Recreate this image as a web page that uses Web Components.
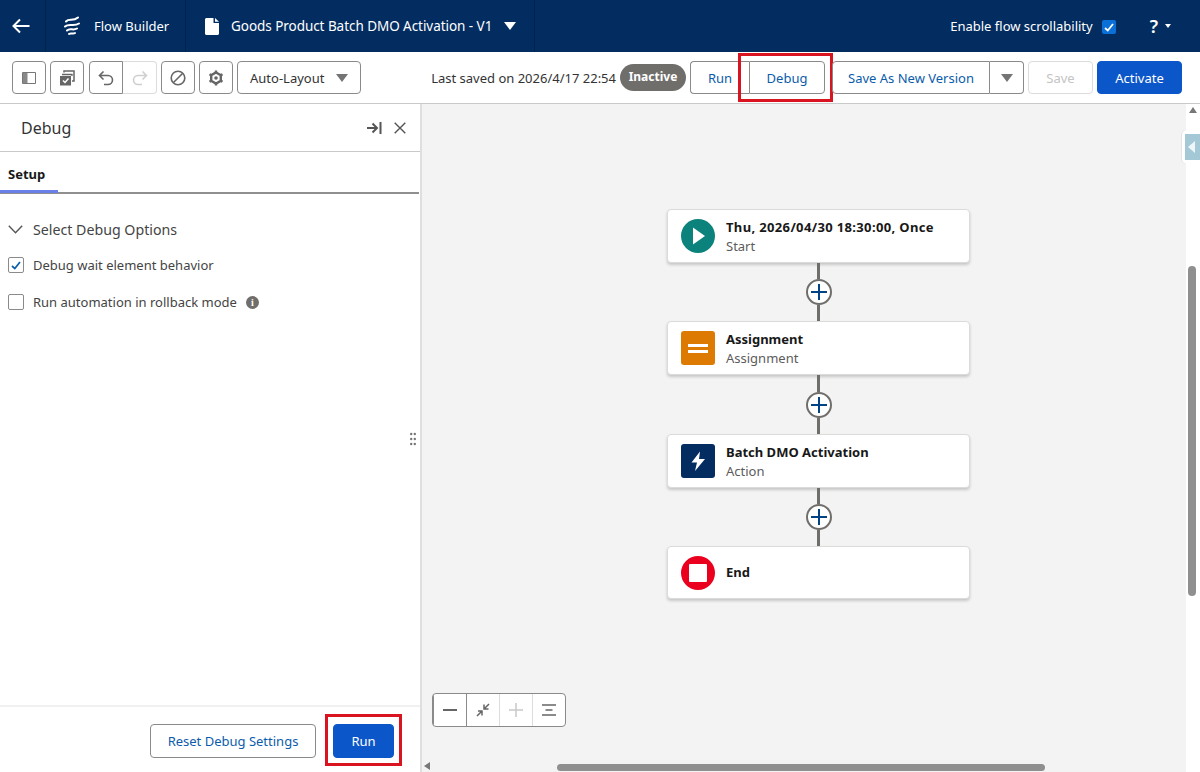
<!DOCTYPE html>
<html lang="en">
<head>
<meta charset="utf-8">
<title>Flow Builder</title>
<style>
html, body { margin: 0; height: 100%; overflow: hidden; }
body { font-family: "Noto Sans", "Open Sans", sans-serif; color: #181818; }
</style>
</head>
<body>
<flow-app>
  <flow-topbar slot="top"></flow-topbar>
  <flow-toolbar slot="tools"></flow-toolbar>
  <debug-panel slot="side"></debug-panel>
  <flow-canvas slot="main">
    <flow-node kind="start" title="Thu, 2026/04/30 18:30:00, Once" sub="Start" style="--title-gap:.35px"></flow-node>
    <flow-link></flow-link>
    <flow-node kind="assign" title="Assignment" sub="Assignment"></flow-node>
    <flow-link style="height:59px"></flow-link>
    <flow-node kind="action" title="Batch DMO Activation" sub="Action"></flow-node>
    <flow-link></flow-link>
    <flow-node kind="end" title="End" style="height:53px"></flow-node>
  </flow-canvas>
</flow-app>

<script>
// page shell
class FlowApp extends HTMLElement {
  constructor () {
    super()
    this.attachShadow({ mode: 'open' }).innerHTML = `
<style>
:host { display: grid; grid-template-rows: 52px 52px 1fr; grid-template-columns: 422px 1fr; width: 1200px; height: 772px; overflow: hidden; }
.full { grid-column: 1 / 3; display: block; }
</style>
<div class="full"><slot name="top"></slot></div>
<div class="full"><slot name="tools"></slot></div>
<slot name="side"></slot>
<slot name="main"></slot>`
  }
}
customElements.define('flow-app', FlowApp)

class FlowTopbar extends HTMLElement {
  constructor () {
    super()
    this.attachShadow({ mode: 'open' }).innerHTML = `
<style>
:host { display: flex; height: 52px; background: #032d60; color: #fff; font-size: 13px; align-items: stretch; }
.cell { display: flex; align-items: center; border-right: 1px solid #02234b; box-sizing: border-box; }
.back { width: 46px; padding-left: 12px; }
.app { width: 140px; padding-left: 18px; gap: 14px; }
.doc { width: 349px; padding-left: 19px; gap: 12px; font-size: 13.5px; }
.doc span { letter-spacing: -.05px; white-space: nowrap; }
.right { margin-left: auto; display: flex; align-items: center; padding-right: 29px; }
.check { width: 14px; height: 14px; background: #0b6fd8; border-radius: 2px; margin-left: 9px; display: flex; align-items: center; justify-content: center; margin-top: 2px; }
.help { font-size: 18px; font-weight: 600; margin-left: 34px; }
.car { margin-left: 7px; width: 0; height: 0; border: 3.5px solid transparent; border-top: 4px solid #fff; border-bottom: 0; }
</style>
<div class="cell back">
  <svg width="18" height="16" viewBox="0 0 18 16"><path d="M8 1.500 1.500 8 8 14.500M2 8h15.500" fill="none" stroke="#fff" stroke-width="2"/></svg>
</div>
<div class="cell app">
  <svg width="16" height="20" viewBox="0 0 16 20"><path d="M2 5.500C5 2 9 6 14 1.500M1 10.500C5 7 10 11 15 7.500M3 14.500C6 11.500 9 15 13 12.500M5 18c2-1.500 4 .5 6-1" fill="none" stroke="#fff" stroke-width="2" stroke-linecap="round"/></svg>
  <span>Flow Builder</span>
</div>
<div class="cell doc">
  <svg width="14" height="17" viewBox="0 0 14 17"><path d="M1.500 0H8.500V5H14V15.500C14 16.300 13.300 17 12.500 17H1.500C.7 17 0 16.300 0 15.500V1.500C0 .7.7 0 1.500 0ZM10 0 14 3.800H10Z" fill="#fff"/></svg>
  <span>Goods Product Batch DMO Activation - V1</span>
  <svg width="12" height="8" viewBox="0 0 12 8"><path d="M0 0H12L6 8Z" fill="#fff"/></svg>
</div>
<div class="right">
  <span>Enable flow scrollability</span>
  <span class="check"><svg width="10" height="9" viewBox="0 0 10 9"><path d="M1 5 3.800 7.500 9 1" fill="none" stroke="#fff" stroke-width="1.800"/></svg></span>
  <span class="help">?</span><span class="car"></span>
</div>`
  }
}
customElements.define('flow-topbar', FlowTopbar)

class ToolButton extends HTMLElement {
  constructor () {
    super()
    this.attachShadow({ mode: 'open' }).innerHTML = `
<style>
:host { display: inline-flex; position: relative; align-items: center; justify-content: center; box-sizing: border-box; height: var(--btn-h, 34px); min-width: 34px; border: 1px solid #8a8a8a; border-radius: 4px; background: #fff; font-size: 13px; color: #0b5cab; white-space: nowrap; }
:host([primary]) { background: #0b57c9; border-color: #0b57c9; color: #fff; }
:host([off]) { border-color: #dcdcdc; color: #c4c4c4; }
:host([mark])::after { content: ""; position: absolute; border: 3px solid #d9131f; box-sizing: border-box; inset: var(--mark); pointer-events: none; }
</style>
<slot></slot>`
  }
}
customElements.define('tool-button', ToolButton)

class FlowToolbar extends HTMLElement {
  constructor () {
    super()
    this.attachShadow({ mode: 'open' }).innerHTML = `
<style>
:host { display: flex; align-items: center; height: 52px; padding: 0 18px 0 12px; box-sizing: border-box; border-bottom: 1px solid #c9c9c9; background: #fff; font-size: 13px; --btn-h: 33px; }
.left { display: flex; gap: 4px; }
.pair { display: flex; margin-left: 1px; }
.pair tool-button:first-child { border-radius: 4px 0 0 4px; }
.pair tool-button:last-child { border-radius: 0 4px 4px 0; border-left: 0; }
.layout { width: 124px; color: #333; justify-content: flex-start; padding-left: 12px; }
.layout svg { margin-left: 12px; flex: none; }
.right { margin-left: auto; display: flex; align-items: center; }
.saved { color: #333; margin-right: 4px; white-space: nowrap; }
.badge { width: 66px; height: 27px; line-height: 26px; text-align: center; border-radius: 14px; background: #706e6b; color: #fff; font-weight: 700; font-size: 12px; margin-right: 4px; }
.run { width: 59px; border-radius: 4px 0 0 4px; border-right: 0; }
.debug { width: 76px; border-radius: 0 4px 4px 0; --mark: -9px -9px -9px -12px; }
.save-new { width: 158px; border-radius: 4px 0 0 4px; margin-left: 7px; }
.more { width: 34px; border-radius: 0 4px 4px 0; border-left: 0; }
.save { width: 65px; margin-left: 4px; }
.activate { width: 85px; margin-left: 4px; }
</style>
<div class="left">
  <tool-button>
    <svg width="14" height="12" viewBox="0 0 14 12"><path d="M.5.5h13v11H.5Z" fill="none" stroke="#777"/><path d="M1 1h4.500v10H1Z" fill="#888"/></svg>
  </tool-button>
  <tool-button>
    <svg width="16" height="16" viewBox="0 0 16 16"><path d="M5 2.500V1H15V11H13" fill="none" stroke="#666" stroke-width="1.500"/><path d="M3 4.500H13V6" fill="none" stroke="#666" stroke-width="1.300"/><path d="M1 6h11v9.500H1Z" fill="#666"/><path d="M4 10.500 6 12.500 9.500 8.500" fill="none" stroke="#fff" stroke-width="1.500"/></svg>
  </tool-button>
  <div class="pair">
    <tool-button>
      <svg width="16" height="16" viewBox="0 0 16 16"><path d="M5.500 1.500 1.500 5.500 5.500 9.500M2 5.500H10A4.500 4.500 0 0 1 10 14.500H6" fill="none" stroke="#666" stroke-width="1.600"/></svg>
    </tool-button>
    <tool-button off style="border-left:0">
      <svg width="16" height="16" viewBox="0 0 16 16"><path d="M10.500 1.500 14.500 5.500 10.500 9.500M14 5.500H6A4.500 4.500 0 0 0 6 14.500H10" fill="none" stroke="#cfcfcf" stroke-width="1.600"/></svg>
    </tool-button>
  </div>
  <tool-button>
    <svg width="16" height="16" viewBox="0 0 16 16"><circle cx="8" cy="8" r="6.800" fill="none" stroke="#666" stroke-width="1.600"/><path d="M3.500 12.500 12.500 3.500" stroke="#666" stroke-width="1.600"/></svg>
  </tool-button>
  <tool-button>
    <svg width="16" height="16" viewBox="0 0 16 16"><path d="M8 2.500 12.800 5.200V10.800L8 13.500 3.200 10.800V5.200Z" fill="none" stroke="#666" stroke-width="2.400"/><path d="M8 .5V3M8 13V15.500M1.500 4.200 3.500 5.400M12.500 10.600 14.500 11.800M14.500 4.200 12.500 5.400M3.500 10.600 1.500 11.800" stroke="#666" stroke-width="2.400"/><circle cx="8" cy="8" r="1.800" fill="#666"/></svg>
  </tool-button>
  <tool-button class="layout"><span>Auto-Layout</span>
    <svg width="12" height="8" viewBox="0 0 12 8"><path d="M0 0H12L6 8Z" fill="#747474"/></svg>
  </tool-button>
</div>
<div class="right">
  <span class="saved">Last saved on 2026/4/17 22:54</span>
  <span class="badge">Inactive</span>
  <tool-button class="run">Run</tool-button>
  <tool-button class="debug" mark>Debug</tool-button>
  <tool-button class="save-new">Save As New Version</tool-button>
  <tool-button class="more">
    <svg width="12" height="8" viewBox="0 0 12 8"><path d="M0 0H12L6 8Z" fill="#747474"/></svg>
  </tool-button>
  <tool-button class="save" off>Save</tool-button>
  <tool-button class="activate" primary>Activate</tool-button>
</div>`
  }
}
customElements.define('flow-toolbar', FlowToolbar)

class CheckRow extends HTMLElement {
  constructor () {
    super()
    const on = this.hasAttribute('checked')
    this.attachShadow({ mode: 'open' }).innerHTML = `
<style>
:host { display: flex; align-items: center; gap: 9px; height: 18px; font-size: 13px; color: #444; }
.box { width: 16px; height: 16px; border: 1px solid #8a8a8a; border-radius: 2px; box-sizing: border-box; display: flex; align-items: center; justify-content: center; background: #fff; }
</style>
<span class="box">${on ? '<svg width="10" height="9" viewBox="0 0 10 9"><path d="M1 5 3.800 7.500 9 1" fill="none" stroke="#0b5cab" stroke-width="1.700"/></svg>' : ''}</span>
<span><slot></slot></span>
<slot name="after"></slot>`
  }
}
customElements.define('check-row', CheckRow)

class DebugPanel extends HTMLElement {
  constructor () {
    super()
    this.attachShadow({ mode: 'open' }).innerHTML = `
<style>
:host { display: flex; flex-direction: column; position: relative; width: 422px; box-sizing: border-box; background: #fff; border-right: 2px solid #dedede; }
header { display: flex; align-items: center; height: 48px; box-sizing: border-box; border-bottom: 1px solid #c9c9c9; padding: 0 14px 0 21px; gap: 12px; }
h2 { margin: 0; font-size: 16px; font-weight: 400; color: #333; flex: 1; }
.tabs { height: 42px; border-bottom: 2px solid #8f8f8f; margin-right: 1px; box-sizing: border-box; }
.tab { display: block; width: 58px; height: 41px; box-sizing: border-box; padding: 13px 0 0 8px; font-size: 13px; font-weight: 700; border-bottom: 3px solid #6b7fe8; color: #181818; }
.body { flex: 1; padding: 24px 8px 0; }
.sec { display: flex; align-items: center; gap: 10px; font-size: 14.2px; color: #444; height: 22px; margin-bottom: 16px; }
check-row + check-row { margin-top: 19px; }
.info { display: inline-flex; align-items: center; justify-content: center; width: 13px; height: 13px; border-radius: 50%; background: #706e6b; color: #fff; font: 700 10px "Liberation Serif", serif; }
footer { display: flex; justify-content: flex-end; gap: 17px; height: 67px; box-sizing: border-box; border-top: 2px solid #f0f0f0; padding: 17px 26px 0 0; }
.reset { width: 166px; }
.go { width: 61px; --mark: -11px -9px -9px -9px; }
.grip { position: absolute; right: 4px; top: 328px; }
</style>
<header>
  <h2>Debug</h2>
  <svg width="15" height="12" viewBox="0 0 15 12"><path d="M0 6H9M5.500 1.500 10 6 5.500 10.500M13.500 0V12" fill="none" stroke="#555" stroke-width="2"/></svg>
  <svg width="12" height="12" viewBox="0 0 12 12"><path d="M.7.7 11.300 11.300M11.300.7.700 11.300" stroke="#555" stroke-width="1.400"/></svg>
</header>
<div class="tabs"><span class="tab">Setup</span></div>
<div class="body">
  <div class="sec">
    <svg width="15" height="9" viewBox="0 0 15 9"><path d="M.8.800 7.500 7.800 14.200.8" fill="none" stroke="#555" stroke-width="1.400"/></svg>
    <span>Select Debug Options</span>
  </div>
  <check-row checked>Debug wait element behavior</check-row>
  <check-row>Run automation in rollback mode<span slot="after" class="info">i</span></check-row>
</div>
<footer>
  <tool-button class="reset">Reset Debug Settings</tool-button>
  <tool-button class="go" primary mark>Run</tool-button>
</footer>
<svg class="grip" width="6" height="14" viewBox="0 0 6 14" fill="#777"><circle cx="1.200" cy="2" r="1.200"/><circle cx="4.800" cy="2" r="1.200"/><circle cx="1.200" cy="7" r="1.200"/><circle cx="4.800" cy="7" r="1.200"/><circle cx="1.200" cy="12" r="1.200"/><circle cx="4.800" cy="12" r="1.200"/></svg>`
  }
}
customElements.define('debug-panel', DebugPanel)

const nodeIcons = {
  start: '<svg width="34" height="34" viewBox="0 0 34 34"><circle cx="17" cy="17" r="17" fill="#0b827c"/><path d="M12 8.500 24 17 12 25.500Z" fill="#fff"/></svg>',
  assign: '<svg width="34" height="34" viewBox="0 0 34 34"><rect width="34" height="34" rx="3" fill="#dd7a01"/><path d="M7 13h20v3H7ZM7 19h20v3H7Z" fill="#fff"/></svg>',
  action: '<svg width="34" height="34" viewBox="0 0 34 34"><rect width="34" height="34" rx="3" fill="#032d60"/><path d="M19 7.500 10.500 18.500H16L14 27 24 15H18Z" fill="#fff"/></svg>',
  end: '<svg width="34" height="34" viewBox="0 0 34 34"><circle cx="17" cy="17" r="17" fill="#ea001e"/><rect x="8" y="8" width="18" height="18" rx="1" fill="#fff"/></svg>'
}

class FlowNode extends HTMLElement {
  constructor () {
    super()
    const sub = this.getAttribute('sub')
    this.attachShadow({ mode: 'open' }).innerHTML = `
<style>
:host { display: flex; align-items: center; gap: 11px; box-sizing: border-box; width: 303px; height: 54px; padding: 0 13px; background: #fff; border: 1px solid #dddbda; border-radius: 4px; box-shadow: 0 2px 3px rgba(0,0,0,.18); }
svg { flex: none; display: block; }
.text.two { padding-top: 1px; }
.text.one { padding-bottom: 2px; }
.title { font-size: 13px; font-weight: 700; line-height: 18px; color: #181818; white-space: nowrap; letter-spacing: var(--title-gap, 0); }
.sub { font-size: 13px; line-height: 18px; color: #5c5c5c; margin-top: 1px; }
</style>
${nodeIcons[this.getAttribute('kind')]}
<div class="text ${sub ? 'two' : 'one'}">
  <div class="title">${this.getAttribute('title')}</div>
  ${sub ? `<div class="sub">${sub}</div>` : ''}
</div>`
  }
}
customElements.define('flow-node', FlowNode)

class FlowLink extends HTMLElement {
  constructor () {
    super()
    this.attachShadow({ mode: 'open' }).innerHTML = `
<style>
:host { display: flex; flex-direction: column; align-items: center; height: 58px; }
.line { width: 3px; flex: 1; background: #706e6b; }
.dot { width: 26px; height: 26px; box-sizing: border-box; border: 2px solid #706e6b; border-radius: 50%; background: #fff; display: flex; align-items: center; justify-content: center; }
</style>
<div class="line"></div>
<div class="dot"><svg width="16" height="16" viewBox="0 0 16 16"><path d="M8 0V16M0 8H16" stroke="#014486" stroke-width="2"/></svg></div>
<div class="line"></div>`
  }
}
customElements.define('flow-link', FlowLink)

class ZoomControls extends HTMLElement {
  constructor () {
    super()
    this.attachShadow({ mode: 'open' }).innerHTML = `
<style>
:host { display: flex; position: absolute; left: 10px; bottom: 45px; height: 34px; box-sizing: border-box; border: 1px solid #8a8a8a; border-radius: 4px; background: #fff; overflow: hidden; }
span { width: 33px; box-sizing: border-box; display: flex; align-items: center; justify-content: center; border-left: 1px solid #8a8a8a; }
span:first-child { border-left: 0; width: 32px; }
span.off { border-color: #dcdcdc; }
span.off + span { border-left-color: #dcdcdc; }
</style>
<span><svg width="14" height="2"><path d="M0 1H14" stroke="#666" stroke-width="2"/></svg></span>
<span><svg width="14" height="14" viewBox="0 0 14 14"><path d="M8.500 5.500 13 1M8 1.500V6H12.500M5.500 8.500 1 13M2 8H6V12.500" stroke="#666" stroke-width="1.500" fill="none"/></svg></span>
<span class="off"><svg width="14" height="14" viewBox="0 0 14 14"><path d="M7 0V14M0 7H14" stroke="#c9c9c9" stroke-width="1.500"/></svg></span>
<span><svg width="14" height="12" viewBox="0 0 14 12"><path d="M0 1H14M3.500 6H10.500M0 11H14" stroke="#666" stroke-width="1.500"/></svg></span>`
  }
}
customElements.define('zoom-controls', ZoomControls)

class FlowCanvas extends HTMLElement {
  constructor () {
    super()
    this.attachShadow({ mode: 'open' }).innerHTML = `
<style>
:host { display: block; position: relative; background: #f3f3f3; overflow: hidden; }
.stack { display: flex; flex-direction: column; align-items: center; width: 303px; margin-left: 245px; padding-top: 105px; }
.vbar { position: absolute; right: 0; top: 0; bottom: 0; width: 14px; background: #fff; }
.vthumb { position: absolute; right: 4px; top: 162px; width: 8px; height: 330px; border-radius: 4px; background: #8f8f8f; }
.up { position: absolute; right: 3px; top: 3px; width: 0; height: 0; border: 4px solid transparent; border-bottom: 6px solid #777; border-top: 0; }
.hbar { position: absolute; left: 0; right: 14px; bottom: 0; height: 12px; }
.hthumb { position: absolute; left: 135px; width: 488px; top: 4px; height: 7px; border-radius: 4px; background: #8f8f8f; }
.lt { position: absolute; left: 2px; top: 2px; width: 0; height: 0; border: 4px solid transparent; border-right: 6px solid #777; border-left: 0; }
.tab { position: absolute; right: 0; top: 26px; width: 18px; height: 34px; box-sizing: border-box; padding: 4px 0 4px 3px; background: #fff; border-radius: 5px 0 0 5px; box-shadow: -1px 0 0 #e4e4e4; }
.tab div { height: 26px; background: #a5c8d6; position: relative; }
.tab div::after { content: ""; position: absolute; left: 3px; top: 7px; border: 6px solid transparent; border-right: 7px solid #eef6f9; border-left: 0; }
</style>
<div class="stack"><slot></slot></div>
<zoom-controls></zoom-controls>
<div class="vbar"><div class="up"></div><div class="vthumb"></div></div>
<div class="tab"><div></div></div>
<div class="hbar"><div class="lt"></div><div class="hthumb"></div></div>`
  }
}
customElements.define('flow-canvas', FlowCanvas)
</script>
</body>
</html>
